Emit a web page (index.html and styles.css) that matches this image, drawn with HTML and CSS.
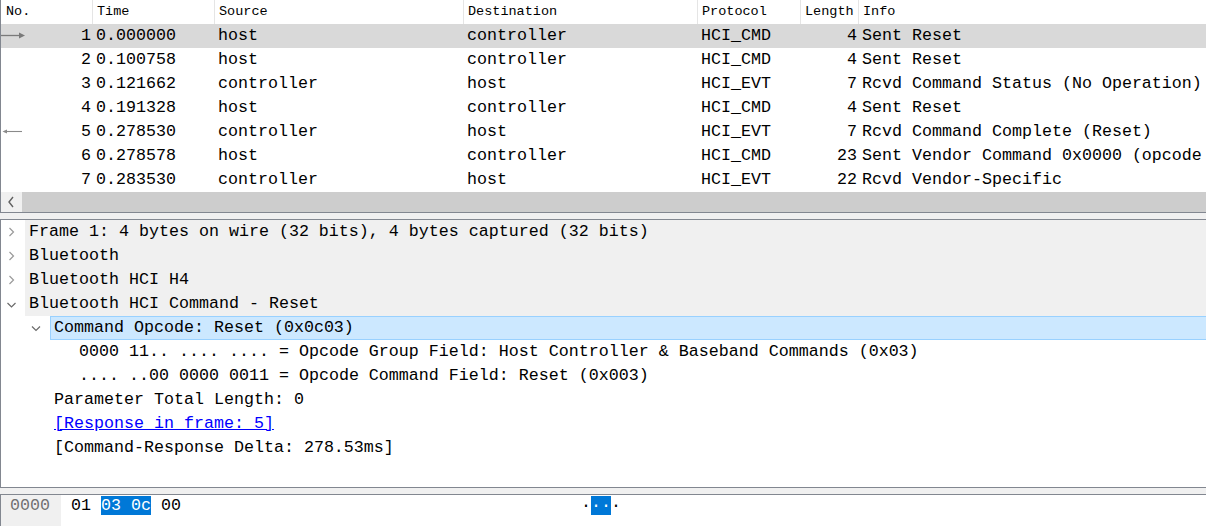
FILE: index.html
```html
<!DOCTYPE html>
<html>
<head>
<meta charset="utf-8">
<title>Packets</title>
<link rel="stylesheet" href="styles.css">
</head>
<body>
<div class="app">
  <section class="plist">
    <div class="plist-view">
      <div class="prow phead">
        <div class="c hc first">No.</div>
        <div class="c hc">Time</div>
        <div class="c hc">Source</div>
        <div class="c hc">Destination</div>
        <div class="c hc">Protocol</div>
        <div class="c hc">Length</div>
        <div class="c hc last">Info</div>
      </div>
      <div class="prow sel">
        <div class="c num"><svg class="arr" width="26" height="24" viewBox="0 0 26 24"><line x1="0" y1="11.5" x2="19" y2="11.5" stroke="#7a7a7a" stroke-width="1.3"/><polygon points="18,8.5 24,11.5 18,14.5" fill="#7a7a7a"/></svg><span>1</span></div>
        <div class="c">0.000000</div><div class="c">host</div><div class="c">controller</div><div class="c">HCI_CMD</div><div class="c r">4</div><div class="c">Sent Reset</div>
      </div>
      <div class="prow">
        <div class="c num"><span></span><span>2</span></div>
        <div class="c">0.100758</div><div class="c">host</div><div class="c">controller</div><div class="c">HCI_CMD</div><div class="c r">4</div><div class="c">Sent Reset</div>
      </div>
      <div class="prow">
        <div class="c num"><span></span><span>3</span></div>
        <div class="c">0.121662</div><div class="c">controller</div><div class="c">host</div><div class="c">HCI_EVT</div><div class="c r">7</div><div class="c">Rcvd Command Status (No Operation)</div>
      </div>
      <div class="prow">
        <div class="c num"><span></span><span>4</span></div>
        <div class="c">0.191328</div><div class="c">host</div><div class="c">controller</div><div class="c">HCI_CMD</div><div class="c r">4</div><div class="c">Sent Reset</div>
      </div>
      <div class="prow">
        <div class="c num"><svg class="arr" width="26" height="24" viewBox="0 0 26 24"><line x1="3" y1="11.5" x2="21" y2="11.5" stroke="#8a8a8a" stroke-width="1.1"/><polygon points="1.5,11.5 6,9.5 6,13.5" fill="#8a8a8a"/></svg><span>5</span></div>
        <div class="c">0.278530</div><div class="c">controller</div><div class="c">host</div><div class="c">HCI_EVT</div><div class="c r">7</div><div class="c">Rcvd Command Complete (Reset)</div>
      </div>
      <div class="prow">
        <div class="c num"><span></span><span>6</span></div>
        <div class="c">0.278578</div><div class="c">host</div><div class="c">controller</div><div class="c">HCI_CMD</div><div class="c r">23</div><div class="c">Sent Vendor Command 0x0000 (opcode</div>
      </div>
      <div class="prow">
        <div class="c num"><span></span><span>7</span></div>
        <div class="c">0.283530</div><div class="c">controller</div><div class="c">host</div><div class="c">HCI_EVT</div><div class="c r">22</div><div class="c">Rcvd Vendor-Specific</div>
      </div>
    </div>
    <div class="hscroll">
      <div class="hbtn"><svg width="21" height="20" viewBox="0 0 21 20"><polyline points="12,5 8,10 12,15" fill="none" stroke="#606060" stroke-width="1.4"/></svg></div>
      <div class="hthumb"></div>
    </div>
  </section>

  <div class="split"></div>

  <section class="tree">
    <div class="trow">
      <span class="tw"><svg width="24" height="24" viewBox="0 0 24 24"><polyline points="8.5,8 12.5,12 8.5,16" fill="none" stroke="#9a9a9a" stroke-width="1.2"/></svg></span>
      <span class="tt top">Frame 1: 4 bytes on wire (32 bits), 4 bytes captured (32 bits)</span>
    </div>
    <div class="trow">
      <span class="tw"><svg width="24" height="24" viewBox="0 0 24 24"><polyline points="8.5,8 12.5,12 8.5,16" fill="none" stroke="#9a9a9a" stroke-width="1.2"/></svg></span>
      <span class="tt top">Bluetooth</span>
    </div>
    <div class="trow">
      <span class="tw"><svg width="24" height="24" viewBox="0 0 24 24"><polyline points="8.5,8 12.5,12 8.5,16" fill="none" stroke="#9a9a9a" stroke-width="1.2"/></svg></span>
      <span class="tt top">Bluetooth HCI H4</span>
    </div>
    <div class="trow">
      <span class="tw"><svg width="24" height="24" viewBox="0 0 24 24"><polyline points="6.5,11 10.5,15 14.5,11" fill="none" stroke="#6a6a6a" stroke-width="1.2"/></svg></span>
      <span class="tt top">Bluetooth HCI Command - Reset</span>
    </div>
    <div class="trow l1">
      <span class="tw"><svg width="24" height="24" viewBox="0 0 24 24"><polyline points="6,10.5 10,14.5 14,10.5" fill="none" stroke="#6a6a6a" stroke-width="1.2"/></svg></span>
      <span class="tt selected">Command Opcode: Reset (0x0c03)</span>
    </div>
    <div class="trow l2">
      <span class="tw"></span>
      <span class="tt">0000 11.. .... .... = Opcode Group Field: Host Controller &amp; Baseband Commands (0x03)</span>
    </div>
    <div class="trow l2">
      <span class="tw"></span>
      <span class="tt">.... ..00 0000 0011 = Opcode Command Field: Reset (0x003)</span>
    </div>
    <div class="trow l1">
      <span class="tw"></span>
      <span class="tt">Parameter Total Length: 0</span>
    </div>
    <div class="trow l1">
      <span class="tw"></span>
      <span class="tt"><a class="link" href="#">[Response in frame: 5]</a></span>
    </div>
    <div class="trow l1">
      <span class="tw"></span>
      <span class="tt">[Command-Response Delta: 278.53ms]</span>
    </div>
  </section>

  <div class="split"></div>

  <section class="bytes">
    <div class="offs">0000</div>
    <div class="hex"><span>01 </span><span class="hl">03 0c</span><span> 00</span></div>
    <div class="ascii"><span class="dot">·</span><span class="hl">··</span><span class="dot">·</span></div>
  </section>
</div>
</body>
</html>
```

FILE: styles.css
```css
html, body {
  margin: 0;
  padding: 0;
  background: #ffffff;
  overflow: hidden;
}

.app {
  width: 1206px;
  height: 526px;
  display: flex;
  flex-direction: column;
  font-family: "Liberation Mono", "DejaVu Sans Mono", monospace;
  font-size: 16.67px;
  color: #000000;
  overflow: hidden;
}

/* ---------- packet list ---------- */
.plist {
  flex: 0 0 211px;
  box-sizing: border-box;
  border-left: 1px solid #828790;
  border-bottom: 1px solid #828790;
  display: flex;
  flex-direction: column;
  background: #ffffff;
}

.plist-view {
  flex: 1;
  overflow: hidden;
}

.prow {
  display: grid;
  grid-template-columns: 92px 122px 249px 234px 103px 58px 1fr;
  height: 24px;
  line-height: 24px;
  white-space: pre;
}

.prow.sel {
  background: #d9d9d9;
}

.c {
  overflow: hidden;
  padding-left: 3px;
}

.c.r {
  text-align: right;
  padding-left: 0;
  padding-right: 2px;
}

.c.num {
  display: flex;
  justify-content: space-between;
  align-items: center;
  padding-left: 0;
  padding-right: 2px;
}

.arr {
  display: block;
  flex: none;
}

.phead .hc {
  font-size: 13.5px;
  border-right: 1px solid #e5e5e5;
  padding-left: 4px;
  line-height: 24px;
}

.phead .hc.first {
  padding-left: 5px;
}

.phead .hc.last {
  border-right: none;
}

.hscroll {
  flex: 0 0 20px;
  display: flex;
  background: #cdcdcd;
}

.hbtn {
  flex: 0 0 21px;
  background: #f0f0f0;
}

.hbtn svg {
  display: block;
}

.hthumb {
  flex: 1;
  background: #cdcdcd;
}

/* ---------- splitter ---------- */
.split {
  flex: 0 0 6px;
  background: #f0f0f0;
}

/* ---------- detail tree ---------- */
.tree {
  flex: 0 0 269px;
  box-sizing: border-box;
  border-top: 1px solid #828790;
  border-bottom: 1px solid #828790;
  border-left: 1px solid #828790;
  background: #ffffff;
  overflow: hidden;
}

.trow {
  display: flex;
  height: 24px;
  white-space: pre;
}

.trow.l1 {
  padding-left: 25px;
}

.trow.l2 {
  padding-left: 50px;
}

.tw {
  flex: 0 0 24px;
  height: 24px;
}

.tw svg {
  display: block;
}

.tt {
  flex: 1;
  box-sizing: border-box;
  height: 24px;
  line-height: 24px;
  padding-left: 4px;
  overflow: hidden;
}

.tt.top {
  background: #f0f0f0;
}

.tt.selected {
  background: #cce8ff;
  border: 1px solid #99d1ff;
  border-right: none;
  line-height: 22px;
  padding-left: 3px;
}

.link {
  color: #0000ff;
  text-decoration: underline;
}

/* ---------- bytes ---------- */
.bytes {
  flex: 1;
  box-sizing: border-box;
  border-top: 1px solid #828790;
  border-left: 1px solid #828790;
  display: flex;
  align-items: flex-start;
  white-space: pre;
  line-height: 22px;
  background: #ffffff;
}

.offs {
  flex: 0 0 60px;
  box-sizing: border-box;
  align-self: stretch;
  background: #f0f0f0;
  color: #707070;
  padding-left: 9px;
}

.hex {
  flex: 0 0 520px;
  box-sizing: border-box;
  padding-left: 10px;
}

.ascii {
  flex: none;
}

.hl {
  background: #0078d7;
  color: #ffffff;
}

.dot {
  color: #000000;
}
```
